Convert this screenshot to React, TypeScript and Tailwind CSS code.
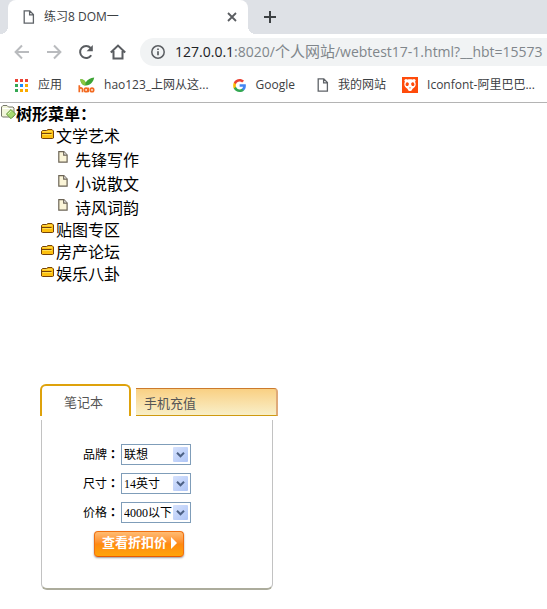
import { useState, type ReactNode } from "react";

const UI_FONT = "font-['Open_Sans','Noto_Sans_CJK_SC',sans-serif]";
const PAGE_FONT = "font-['Liberation_Sans','Noto_Sans_CJK_SC',sans-serif]";
const FORM_FONT = "font-['Liberation_Serif','Noto_Sans_CJK_SC',sans-serif]";
const COLON_FONT = "font-['Noto_Sans_CJK_TC',sans-serif]";

function DocIcon() {
  return (
    <svg viewBox="0 0 12 14" className="h-3.5 w-3 shrink-0" fill="none" stroke="#5f6368" strokeWidth="1.3">
      <path d="M1.2 .8h5.6l3.6 3.7v8.7H1.2zM6.6 .8v4h3.8" />
    </svg>
  );
}

function AppsIcon() {
  const colors = ["#ea4335", "#ea4335", "#ea4335", "#34a853", "#1a8cff", "#fbab00", "#34a853", "#fbab00", "#fbab00"];
  return (
    <svg viewBox="0 0 13 13" className="size-[13px] shrink-0" shapeRendering="crispEdges">
      {colors.map((c, i) => (
        <rect key={i} x={(i % 3) * 5} y={Math.floor(i / 3) * 5} width="3" height="3" fill={c} />
      ))}
    </svg>
  );
}

function HaoIcon() {
  return (
    <svg viewBox="0 0 17 16" className="h-4 w-[17px] shrink-0" fill="none">
      <path d="M2.200 2.200C5.500 2 7 3.600 7.600 5.600 9.500 2.500 12.500 .8 16.200 .6 15.500 4.700 12.500 8.200 8 8.600 4.600 8.600 2.600 6 2.200 2.200z" fill="#3da435" />
      <path d="M2.200 2.200C5.500 2 7 3.600 7.600 5.600L7.300 8.300C4.400 8 2.500 5.600 2.200 2.200z" fill="#8cc63f" />
      <g stroke="#f26a21" strokeWidth="1.700">
        <path d="M1.300 8.200v7M1.300 12.500c0-2.200 3.200-2.200 3.200 0v2.700" />
        <circle cx="8.100" cy="12.900" r="1.700" />
        <path d="M10.300 10.600v4.600" />
        <circle cx="14" cy="12.900" r="1.700" />
      </g>
    </svg>
  );
}

function GoogleIcon() {
  return (
    <svg viewBox="0 0 48 48" className="size-[13px] shrink-0">
      <path fill="#4285f4" d="M47.500 24.500c0-1.600-.2-3.200-.4-4.700H24.500v9h13c-.6 3-2.300 5.500-4.800 7.200v6h7.700c4.500-4.200 7.100-10.300 7.100-17.500z" />
      <path fill="#34a853" d="M24.500 48c6.500 0 12-2.100 15.900-5.800l-7.700-6c-2.200 1.400-4.900 2.300-8.200 2.300-6.300 0-11.600-4.200-13.500-9.900H3v6.200C7 42.600 15.100 48 24.500 48z" />
      <path fill="#fbbc05" d="M11 28.600c-1-2.900-1-6.200 0-9.200v-6.200H3c-3.300 6.800-3.300 14.800 0 21.600z" />
      <path fill="#ea4335" d="M24.500 9.500c3.500-.1 6.800 1.300 9.300 3.700l6.900-6.900C36.300 2.200 30.500 0 24.500 0 15.100 0 7 5.400 3 13.200l8 6.200c1.900-5.700 7.200-9.900 13.500-9.900z" />
    </svg>
  );
}

function IconfontIcon() {
  return (
    <svg viewBox="0 0 16 16" className="size-4 shrink-0">
      <path d="M0 0h16v16H0z" fill="#ff4b0b" />
      <circle cx="4" cy="3.600" r="1.600" fill="#fff" />
      <circle cx="12" cy="3.600" r="1.600" fill="#fff" />
      <path d="M8 2.200c3.400 0 5.700 2 5.700 4.900 0 2.400-1.500 4-3.400 4.800-.2 1.400-1 2.100-2.300 2.100s-2.100-.7-2.300-2.100c-1.900-.8-3.400-2.400-3.400-4.800 0-2.900 2.300-4.900 5.700-4.900z" fill="#fff" />
      <g fill="#ff4b0b">
        <ellipse cx="5.200" cy="7.200" rx="1.600" ry="1.900" transform="rotate(25 5.200 7.200)" />
        <ellipse cx="10.800" cy="7.200" rx="1.600" ry="1.900" transform="rotate(-25 10.800 7.200)" />
        <path d="M7 10.500h2l-1 1.300z" />
      </g>
    </svg>
  );
}

function NavButton({ label, children, muted = false }: { label: string; children: ReactNode; muted?: boolean }) {
  return (
    <button type="button" aria-label={label} className={muted ? "text-[#b9bbbe]" : "text-[#5a5d61]"}>
      <svg viewBox="0 0 16 16" className="size-4" fill="none" stroke="currentColor" strokeWidth="2">
        {children}
      </svg>
    </button>
  );
}

function Bookmark({ icon, children }: { icon: ReactNode; children: ReactNode }) {
  return (
    <a href="#" className="flex shrink-0 items-center gap-[9px] whitespace-nowrap">
      {icon}
      {children}
    </a>
  );
}

function BrowserChrome() {
  return (
    <header className={`${UI_FONT} border-b border-[#b4b4b4] text-xs text-[#3c4043]`}>
      <div className="flex h-[34px] bg-[#dee1e6] pl-2">
        <div className="relative flex w-60 items-center rounded-t-lg bg-white pl-[15px] pr-2.5">
          <span className="absolute -left-2 bottom-0 size-2 bg-[radial-gradient(circle_at_0_0,#dee1e6_8px,white_8px)]" />
          <span className="absolute -right-2 bottom-0 size-2 bg-[radial-gradient(circle_at_100%_0,#dee1e6_8px,white_8px)]" />
          <DocIcon />
          <span className="ml-[9px] grow">练习8 DOM一</span>
          <button type="button" aria-label="关闭标签页">
            <svg viewBox="0 0 12 12" className="size-3" stroke="#5a5d61" strokeWidth="1.800">
              <path d="M2 2l8 8M10 2l-8 8" />
            </svg>
          </button>
        </div>
        <button type="button" aria-label="新标签页" className="ml-4">
          <svg viewBox="0 0 12 12" className="size-3" stroke="#3c4043" strokeWidth="2">
            <path d="M6 0v12M0 6h12" />
          </svg>
        </button>
      </div>
      <div className="flex h-9 items-center gap-4 pl-3.5">
        <NavButton label="后退" muted>
          <path d="M15 8H2M8 1.500L1.600 8 8 14.500" />
        </NavButton>
        <NavButton label="前进" muted>
          <path d="M1 8h13M8 1.500L14.400 8 8 14.500" />
        </NavButton>
        <NavButton label="重新加载">
          <path d="M13.200 11.200A6 6 0 1 1 12.600 4" />
          <path d="M14.800 1v6.200H8.600z" fill="currentColor" stroke="none" />
        </NavButton>
        <NavButton label="主页">
          <path d="M.8 8.500L8 1.600l7.200 6.900M3.500 7v7.500h9V7" />
        </NavButton>
        <div className="-ml-0.5 flex h-7 min-w-0 grow items-center gap-2.5 rounded-l-full bg-[#f1f3f4] pl-[11px]">
          <svg viewBox="0 0 14 14" className="size-3.5 shrink-0" fill="none" stroke="#5a5d61" strokeWidth="1.500">
            <circle cx="7" cy="7" r="6.200" />
            <path d="M7 6.200v4M7 3.600v1.500" strokeWidth="1.700" />
          </svg>
          <span className="whitespace-nowrap text-sm text-[#80868b]">
            <span className="text-[#202124]">127.0.0.1</span>:8020/<span className="text-[15px]">个人网站</span>
            /webtest17-1.html?__hbt=15573
          </span>
        </div>
      </div>
      <nav className="flex h-8 items-center overflow-hidden pb-0.5 pl-[15px]">
        <div className="flex items-center gap-4 leading-4">
          <Bookmark icon={<span className="pr-px"><AppsIcon /></span>}>应用</Bookmark>
          <Bookmark icon={<HaoIcon />}>hao123_上网从这...</Bookmark>
          <span className="ml-2 mr-1.5">
            <Bookmark icon={<span className="pr-px"><GoogleIcon /></span>}>Google</Bookmark>
          </span>
          <Bookmark icon={<DocIcon />}>我的网站</Bookmark>
          <Bookmark icon={<IconfontIcon />}>Iconfont-阿里巴巴...</Bookmark>
        </div>
      </nav>
    </header>
  );
}

function RootIcon() {
  return (
    <svg viewBox="0 0 16 16" className="size-4 shrink-0">
      <path d="M1.500 12V3L3 1.500h4L8.500 3h4.500l1 1v8l-1 1H2.500z" fill="#f1f6da" stroke="#77776a" />
      <path d="M2.500 4.500h10" stroke="#fff" />
      <path d="M11 5.500l4.600 4.600-4.600 4.600-4.600-4.600z" fill="#a5d870" stroke="#6a9a45" />
      <path d="M10.800 7.200l-2.800 2.800" stroke="#dff5c0" />
    </svg>
  );
}

function FolderIcon() {
  return (
    <svg viewBox="0 0 13 12" className="h-3 w-[13px] shrink-0">
      <path d="M.5 10V3.500l1-1h4l1.500-1h4l1.500 1.500v7l-1 .5h-10z" fill="#fdc010" stroke="#75420a" />
      <path d="M2 3.500h9" stroke="#ffd94a" />
      <path d="M1 5.500h9.500" stroke="#75420a" />
      <path d="M1.500 6.500h9.500" stroke="#ffdf55" />
    </svg>
  );
}

function LeafIcon() {
  return (
    <svg viewBox="0 0 10 12" className="h-3 w-2.5 shrink-0">
      <path d="M.8 .7h5l3.300 3.400v7H.8z" fill="#fbf5d8" stroke="#6c6455" strokeWidth="1.200" />
      <path d="M5.700 .7v3.500h3.400" fill="#fff" stroke="#6c6455" strokeWidth="1.200" />
    </svg>
  );
}

function Folder({ name, items = [] }: { name: string; items?: string[] }) {
  return (
    <li>
      <div className="flex h-[22px] items-center gap-0.5">
        <span className="-mt-1.5 pl-px"><FolderIcon /></span>
        {name}
      </div>
      {items.length > 0 && (
        <ul className="pl-[18px]">
          {items.map((item) => (
            <li key={item} className="flex h-6 items-center gap-[7px] pt-0.5">
              <span className="-mt-2"><LeafIcon /></span>
              {item}
            </li>
          ))}
        </ul>
      )}
    </li>
  );
}

function Field({ id, label, options }: { id: string; label: string; options: string[] }) {
  return (
    <div className="flex h-[21px] items-center gap-0.5">
      <label htmlFor={id} className="w-9 shrink-0 whitespace-nowrap">
        {label}
        <span className={`${COLON_FONT} font-bold`}>：</span>
      </label>
      <div className="relative h-full w-[70px]">
        <select id={id} className="size-full appearance-none border border-[#7f9db9] bg-white pl-0.5 text-xs leading-4">
          {options.map((o) => (
            <option key={o}>{o}</option>
          ))}
        </select>
        <span className="pointer-events-none absolute inset-y-[3px] right-[3px] flex w-[15px] items-center justify-center rounded-[1px] bg-gradient-to-br from-[#d6e2fd] to-[#afc5f6]">
          <svg viewBox="0 0 9 6" className="h-1.5 w-[9px]" fill="none" stroke="#4d6185" strokeWidth="2">
            <path d="M1 .8l3.500 3.500L8 .8" />
          </svg>
        </span>
      </div>
    </div>
  );
}

function ShopPanel() {
  const [tab, setTab] = useState(0);
  return (
    <section className={`${FORM_FONT} w-[238px] text-xs text-black`}>
      <div className="flex items-end gap-[5px] text-[13px] text-[#555]">
        <button
          type="button"
          aria-pressed={tab === 0}
          onClick={() => setTab(0)}
          className="h-8 w-[91px] rounded-t-md border-2 border-b-0 border-[#dea20c] bg-white pr-1 pt-1"
        >
          笔记本
        </button>
        <button
          type="button"
          aria-pressed={tab === 1}
          onClick={() => setTab(1)}
          className="h-7 grow rounded-tr border border-b-[#cf9a10] border-l-0 border-r-2 border-r-[#dfa978] border-t-[#cc7a2c] bg-gradient-to-b from-[#f9d083] to-[#f8efc8] pl-2 pt-1 text-left"
        >
          手机充值
        </button>
      </div>
      <form
        className="ml-px mr-[5px] mt-1 flex flex-col gap-2 rounded-b-md border border-b-2 border-t-0 border-[#c2c2c2] border-b-[#acac9c] pb-[31px] pl-[41px] pt-6"
        onSubmit={(e) => e.preventDefault()}
      >
        <Field id="brand" label="品牌" options={["联想"]} />
        <Field id="size" label="尺寸" options={["14英寸"]} />
        <Field id="price" label="价格" options={["4000以下"]} />
        <button
          type="submit"
          className="ml-[11px] flex h-[26px] w-[90px] items-center gap-1 rounded-sm border border-[#f07010] border-b-[#e85a00] bg-gradient-to-b from-[#ffbc72] via-[#ff8a10] to-[#ffa408] pb-0.5 pl-[7px] text-[13px] font-bold text-white shadow-[0_1px_2px_#999]"
        >
          查看折扣价
          <svg viewBox="0 0 6 12" className="h-3 w-1.5" fill="#fff">
            <path d="M0 0l6 6-6 6z" />
          </svg>
        </button>
      </form>
    </section>
  );
}

export default function App() {
  return (
    <div className="min-h-screen bg-white">
      <BrowserChrome />
      <main className={`${PAGE_FONT} pt-px text-base leading-[22px] text-black`}>
        <h1 className="flex h-[22px] items-center font-bold">
          <span className="-mt-1.5"><RootIcon /></span>
          树形菜单：
        </h1>
        <ul className="pl-10">
          <Folder name="文学艺术" items={["先锋写作", "小说散文", "诗风词韵"]} />
          <Folder name="贴图专区" />
          <Folder name="房产论坛" />
          <Folder name="娱乐八卦" />
        </ul>
        <div className="pb-4 pl-10 pt-[98px]">
          <ShopPanel />
        </div>
      </main>
    </div>
  );
}
